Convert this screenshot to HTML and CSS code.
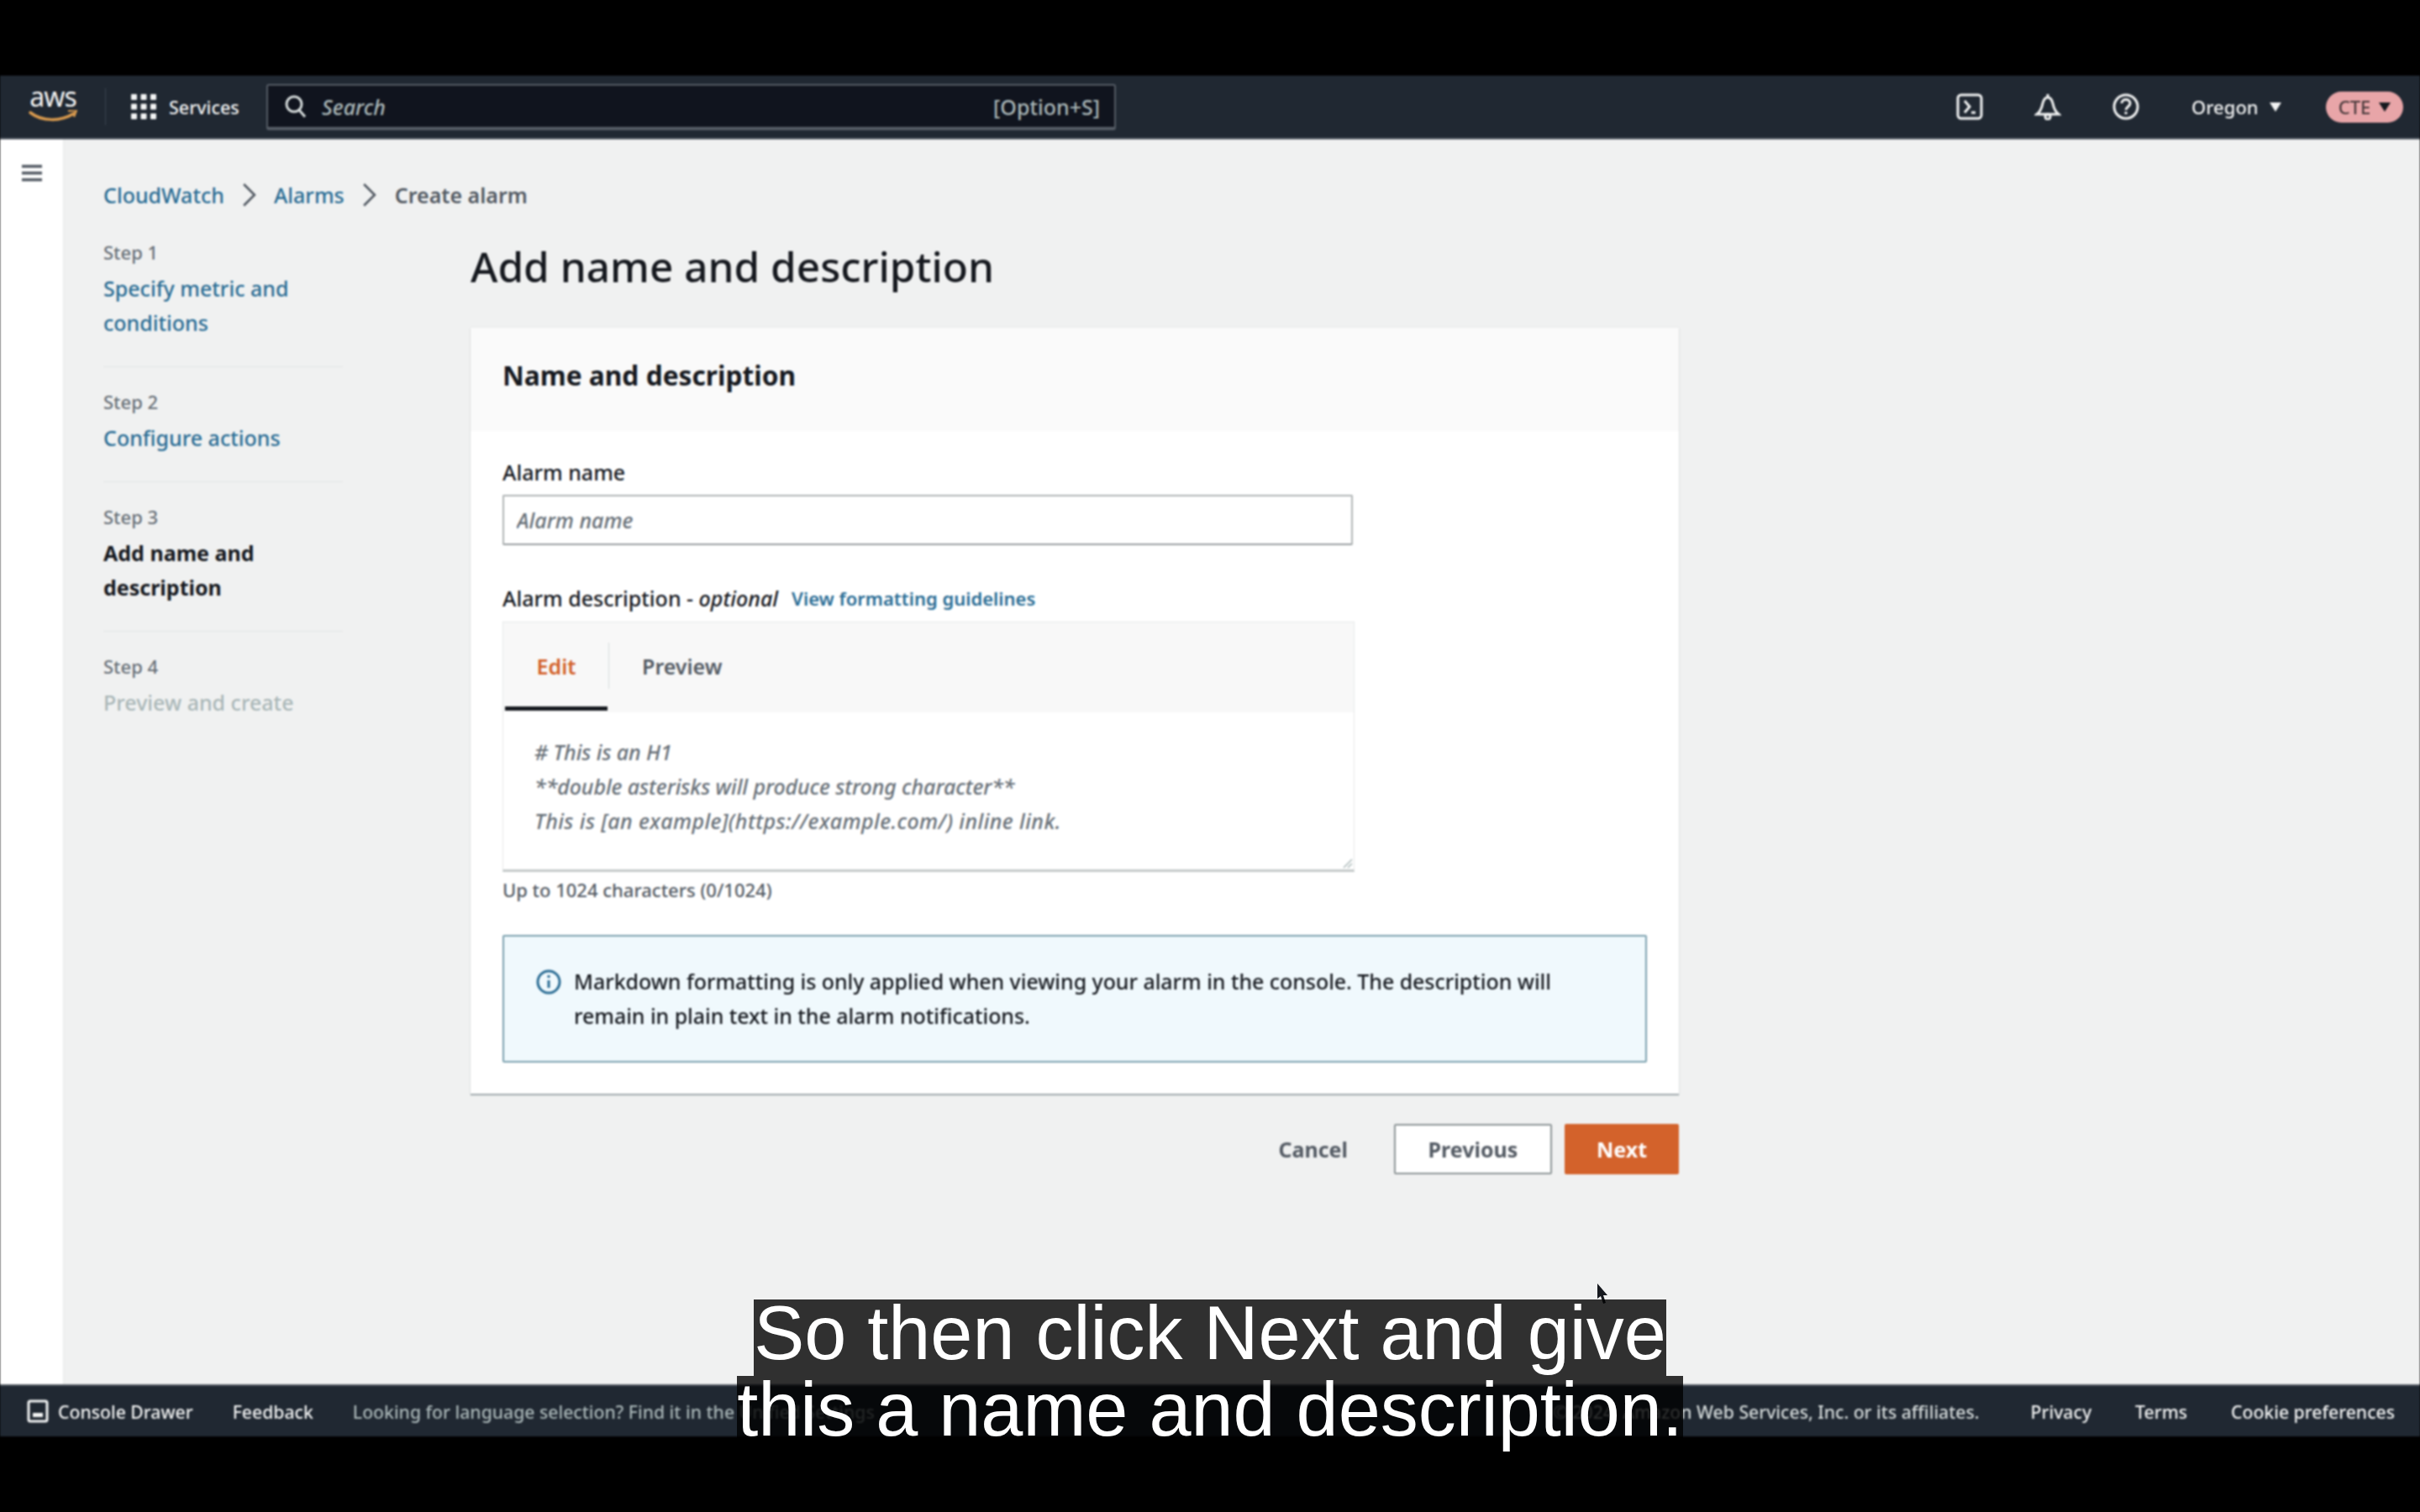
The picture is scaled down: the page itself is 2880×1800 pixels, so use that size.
FILE: index.html
```html
<!DOCTYPE html>
<html lang="en">
<head>
    <meta charset="UTF-8">
    <meta name="viewport" content="width=device-width, initial-scale=1.0">
    <title>Add name and description</title>
    <link rel="stylesheet" href="styles.css">
</head>
<body>
    <div class="letterbox"></div>
    <div class="app">
        <header class="topnav">
            <div class="logo">
                <span class="logo-text">aws</span>
                <svg class="logo-smile" viewBox="0 0 60 16"><path d="M3 3c14 11 36 11 52 1" fill="none" stroke="#d99a4e" stroke-width="3.5" stroke-linecap="round"/><path d="M48 1l10-1-3 8" fill="none" stroke="#d99a4e" stroke-width="2.5"/></svg>
            </div>
            <div class="nav-sep"></div>
            <svg class="grid-icon" viewBox="0 0 32 32" fill="#f2f3f3"><rect x="1" y="1" width="7" height="7" rx="1"/><rect x="12.5" y="1" width="7" height="7" rx="1"/><rect x="24" y="1" width="7" height="7" rx="1"/><rect x="1" y="12.5" width="7" height="7" rx="1"/><rect x="12.5" y="12.5" width="7" height="7" rx="1"/><rect x="24" y="12.5" width="7" height="7" rx="1"/><rect x="1" y="24" width="7" height="7" rx="1"/><rect x="12.5" y="24" width="7" height="7" rx="1"/><rect x="24" y="24" width="7" height="7" rx="1"/></svg>
            <span class="services">Services</span>
            <div class="search">
                <svg class="search-icon" viewBox="0 0 26 28" fill="none" stroke="#d5dbdb" stroke-width="3"><circle cx="11" cy="11" r="9"/><path d="M17 18l7 8"/></svg>
                <span class="search-text">Search</span>
                <span class="search-key">[Option+S]</span>
            </div>
            <div class="nav-right">
                <svg class="nav-icon" viewBox="0 0 32 32" fill="none" stroke="#f2f3f3" stroke-width="3"><rect x="2" y="2" width="28" height="28" rx="4"/><path d="M10 9l6 7-6 7M18 23h5"/></svg>
                <svg class="nav-icon" viewBox="0 0 32 32" fill="none" stroke="#f2f3f3" stroke-width="3"><path d="M3 25c4-3 6-8 7-13 1-4 3-7 6-7s5 3 6 7c1 5 3 10 7 13z"/><circle cx="16" cy="28" r="3"/><path d="M16 1v4"/></svg>
                <svg class="nav-icon nav-icon-last" viewBox="0 0 32 32" fill="none" stroke="#f2f3f3" stroke-width="3"><circle cx="16" cy="16" r="14"/><path d="M11 12c0-6 10-6 10 0 0 4-5 4-5 8M16 22v3"/></svg>
                <span class="region">Oregon <i class="caret"></i></span>
                <span class="account">CTE <i class="caret caret-dark"></i></span>
            </div>
        </header>

        <div class="shell">
            <aside class="rail">
                <svg class="menu-icon" viewBox="0 0 24 22" fill="none" stroke="#545b64" stroke-width="3.5"><path d="M0 3h24M0 11h24M0 19h24"/></svg>
            </aside>
            <main class="content">
                <nav class="breadcrumb">
                    <a href="#">CloudWatch</a>
                    <svg class="crumb-sep" viewBox="0 0 16 26" fill="none" stroke="#545b64" stroke-width="2.5"><path d="M2 1l12 12L2 25"/></svg>
                    <a href="#">Alarms</a>
                    <svg class="crumb-sep" viewBox="0 0 16 26" fill="none" stroke="#545b64" stroke-width="2.5"><path d="M2 1l12 12L2 25"/></svg>
                    <span class="crumb-current">Create alarm</span>
                </nav>
                <div class="wizard">
                    <ol class="steps">
                        <li class="step">
                            <small>Step 1</small>
                            <a href="#">Specify metric and conditions</a>
                        </li>
                        <li class="step">
                            <small>Step 2</small>
                            <a href="#">Configure actions</a>
                        </li>
                        <li class="step">
                            <small>Step 3</small>
                            <strong>Add name and description</strong>
                        </li>
                        <li class="step">
                            <small>Step 4</small>
                            <span class="step-off">Preview and create</span>
                        </li>
                    </ol>
                    <div class="form">
                        <h1>Add name and description</h1>
                        <section class="card">
                            <h2>Name and description</h2>
                            <div class="card-body">
                                <label for="alarmName">Alarm name</label>
                                <input type="text" id="alarmName" placeholder="Alarm name">

                                <div class="desc-label">
                                    <label>Alarm description - <em>optional</em></label>
                                    <a href="#">View formatting guidelines</a>
                                </div>
                                <div class="editor">
                                    <div class="tabs">
                                        <span class="tab tab-on">Edit</span>
                                        <span class="tab-sep"></span>
                                        <span class="tab">Preview</span>
                                    </div>
                                    <div class="sample">
                                        <div># This is an H1</div>
                                        <div>**double asterisks will produce strong character**</div>
                                        <div class="sample-wide">This is [an example](https://example.com/) inline link.</div>
                                        <svg class="grip" viewBox="0 0 12 12" fill="none" stroke="#aab7b8" stroke-width="1.5"><path d="M11 1L1 11M11 6l-5 5"/></svg>
                                    </div>
                                </div>
                                <p class="hint">Up to 1024 characters (0/1024)</p>

                                <div class="alert">
                                    <svg class="alert-icon" viewBox="0 0 30 30" fill="none" stroke="#2a6c94" stroke-width="3"><circle cx="15" cy="15" r="13"/><path d="M15 13v9M15 7v3"/></svg>
                                    <p>Markdown formatting is only applied when viewing your alarm in the console. The description will remain in plain text in the alarm notifications.</p>
                                </div>
                            </div>
                        </section>
                        <div class="actions">
                            <button type="button" class="btn-link">Cancel</button>
                            <button type="button" class="btn">Previous</button>
                            <button type="button" class="btn btn-primary">Next</button>
                        </div>
                    </div>
                </div>
            </main>
        </div>

        <footer class="bottombar">
            <svg class="drawer-icon" viewBox="0 0 26 28" fill="none" stroke="#f2f3f3" stroke-width="3"><rect x="2" y="2" width="22" height="24" rx="2"/><rect x="7" y="16" width="12" height="5" fill="#f2f3f3" stroke="none"/></svg>
            <span class="foot-link">Console Drawer</span>
            <span class="foot-link">Feedback</span>
            <span class="foot-note">Looking for language selection? Find it in the Unified Settings</span>
            <div class="foot-right">
                <span class="foot-copy">&copy; 2024, Amazon Web Services, Inc. or its affiliates.</span>
                <span class="foot-link">Privacy</span>
                <span class="foot-link">Terms</span>
                <span class="foot-link">Cookie preferences</span>
            </div>
        </footer>
    </div>
    <div class="letterbox"></div>

    <svg class="cursor" viewBox="0 0 14 24" fill="#16191f"><path d="M1 0l12 14-5 0 3 9-3 1-3-9-4 3z"/></svg>

    <div class="subtitle">
        <span>So then click Next and give</span>
        <span>this a name and description.</span>
    </div>
</body>
</html>
```

FILE: styles.css
```css
* {
    box-sizing: border-box;
}
body {
    margin: 0;
    width: 2880px;
    height: 1800px;
    overflow: hidden;
    background-color: #000;
    font-family: "Noto Sans", Arial, sans-serif;
    font-size: 25px;
    font-weight: 500;
    color: #16191f;
    position: relative;
}
a {
    color: #2a6c94;
    text-decoration: none;
}
.letterbox {
    height: 90px;
    background-color: #000;
}
.app {
    height: 1620px;
    display: flex;
    flex-direction: column;
    filter: blur(0.9px);
}

/* top bar */
.topnav {
    height: 76px;
    flex-shrink: 0;
    background-color: #202832;
    color: #f2f3f3;
    display: flex;
    align-items: center;
    padding-left: 33px;
    border-bottom: 2px solid #545b64;
}
.logo {
    width: 60px;
    height: 50px;
    margin-top: -6px;
    display: flex;
    flex-direction: column;
    align-items: center;
}
.logo-text {
    font-size: 32px;
    font-weight: 400;
    line-height: 32px;
    letter-spacing: -1px;
    color: #f2f3f3;
}
.logo-smile {
    width: 60px;
    height: 16px;
}
.nav-sep {
    width: 1px;
    height: 44px;
    background-color: #3a4350;
    margin: 0 29px 0 32px;
}
.grid-icon {
    width: 32px;
    height: 32px;
}
.services {
    font-size: 21.5px;
    margin-left: 14px;
    width: 116px;
}
.search {
    width: 1011px;
    height: 55px;
    background-color: #10141e;
    border: 2px solid #545b64;
    border-bottom-width: 4px;
    border-radius: 3px;
    display: flex;
    align-items: center;
    padding: 2px 17px 0 20px;
    color: #aab7b8;
}
.search-icon {
    width: 26px;
    height: 28px;
}
.search-text {
    font-style: italic;
    margin-left: 18px;
}
.search-key {
    margin-left: auto;
}
.nav-right {
    margin-left: auto;
    display: flex;
    align-items: center;
    padding-right: 20px;
}
.nav-icon {
    width: 32px;
    height: 32px;
    margin-right: 61px;
}
.nav-icon-last {
    margin-right: 63px;
}
.region {
    font-size: 22px;
    width: 160px;
    margin-left: -1px;
    display: flex;
    align-items: center;
    gap: 13px;
}
.caret {
    display: inline-block;
    border-left: 7px solid transparent;
    border-right: 7px solid transparent;
    border-top: 11px solid #f2f3f3;
}
.caret-dark {
    border-top-color: #16191f;
}
.account {
    width: 92px;
    height: 37px;
    border-radius: 19px;
    background-color: #e8a5a8;
    color: #4a3a3c;
    font-size: 22px;
    display: flex;
    align-items: center;
    justify-content: center;
    gap: 10px;
}

/* page */
.shell {
    flex: 1;
    display: flex;
    min-height: 0;
}
.rail {
    width: 76px;
    background-color: #fff;
    border-right: 1px solid #e6e8e8;
    padding: 29px 0 0 26px;
}
.menu-icon {
    display: block;
    width: 24px;
    height: 22px;
}
.content {
    flex: 1;
    background-color: #f0f1f1;
    padding: 49px 0 0 47px;
}
.breadcrumb {
    height: 34px;
    display: flex;
    align-items: center;
    gap: 21px;
}
.crumb-sep {
    width: 17px;
    height: 28px;
}
.crumb-current {
    color: #545b64;
    font-weight: 600;
    margin-left: 1px;
}

.wizard {
    display: flex;
    margin-top: 36px;
}
.steps {
    list-style: none;
    margin: 0;
    padding: 0;
    width: 285px;
    margin-right: 152px;
}
.step {
    padding-bottom: 31px;
    margin-bottom: 26px;
    border-bottom: 1px solid #e2e4e4;
    line-height: 41px;
}
.step:last-child {
    border-bottom: none;
}
.step small {
    display: block;
    font-size: 22px;
    line-height: 30px;
    margin-bottom: 8px;
    color: #687078;
}
.step a,
.step strong,
.step-off {
    display: block;
}
.step-off {
    color: #aab7b8;
}

.form {
    width: 1438px;
}
h1 {
    margin: 0 0 41px;
    font-size: 49.5px;
    line-height: 64px;
    font-weight: 500;
}
.card {
    background-color: #fff;
    box-shadow: 0 2px 1px rgba(0, 28, 36, 0.3), 0 0 1px rgba(0, 28, 36, 0.2);
}
h2 {
    margin: 0;
    height: 123px;
    padding: 0 38px 10px;
    display: flex;
    align-items: center;
    font-size: 31.7px;
    font-weight: 700;
    background-color: #fafafa;
}
.card-body {
    padding: 32px 38px 37px;
}
label {
    display: block;
    line-height: 34px;
    font-size: 25px;
}
input {
    display: block;
    width: 1012px;
    height: 60px;
    margin-top: 10px;
    padding: 0 15px;
    border: 2px solid #b0b5b6;
    border-bottom-color: #989ea0;
    border-radius: 2px;
    font-family: inherit;
    font-size: 25px;
    font-weight: 500;
}
input::placeholder {
    font-style: italic;
    color: #687078;
    opacity: 1;
}
.desc-label {
    display: flex;
    align-items: center;
    gap: 16px;
    margin-top: 46px;
}
.desc-label a {
    font-size: 22px;
    font-weight: 600;
}
.editor {
    width: 1014px;
    height: 298px;
    margin-top: 11px;
    border: 1px solid #e6e8e8;
    border-bottom: 3px solid #c4c9c9;
    display: flex;
    flex-direction: column;
}
.tabs {
    height: 107px;
    padding-bottom: 4px;
    background-color: #f8f8f8;
    display: flex;
    align-items: center;
    flex-shrink: 0;
}
.tab {
    font-weight: 600;
    color: #545b64;
    margin-left: 39px;
}
.tab-on {
    align-self: flex-start;
    margin: 0 0 0 2px;
    width: 122px;
    height: 105px;
    padding-top: 4px;
    border-bottom: 5px solid #16191f;
    color: #d3622b;
    display: flex;
    align-items: center;
    justify-content: center;
}
.tab-sep {
    width: 1px;
    height: 55px;
    margin-left: 1px;
    background-color: #d5dbdb;
}
.sample {
    flex: 1;
    position: relative;
    padding: 27px 37px 0;
    line-height: 41px;
    font-style: italic;
    letter-spacing: -0.1px;
    color: #687078;
    background-color: #fff;
}
.sample-wide {
    letter-spacing: 0.4px;
}
.grip {
    position: absolute;
    right: 1px;
    bottom: 1px;
    width: 12px;
    height: 12px;
}
.hint {
    margin: 6px 0 39px;
    font-size: 22px;
    line-height: 30px;
    color: #545b64;
}
.alert {
    height: 152px;
    background-color: #f0f9fd;
    border: 2px solid #7ba0ae;
    border-radius: 2px;
    display: flex;
    align-items: flex-start;
    padding: 33px 90px 0 38px;
}
.alert-icon {
    width: 30px;
    height: 30px;
    flex-shrink: 0;
    margin: 6px 15px 0 0;
}
.alert p {
    margin: 0;
    line-height: 41px;
    letter-spacing: -0.06px;
}
.actions {
    display: flex;
    justify-content: flex-end;
    align-items: center;
    margin-top: 36px;
    gap: 15px;
}
.btn,
.btn-link {
    height: 60px;
    font-family: inherit;
    font-size: 25px;
    font-weight: 700;
    color: #545b64;
    background: none;
    border: none;
    padding: 0;
}
.btn {
    background-color: #fff;
    border: 2px solid #8d9596;
    border-radius: 2px;
    width: 188px;
}
.btn-link {
    margin-right: 40px;
}
.btn-primary {
    width: 136px;
    background-color: #d3622b;
    border: none;
    color: #fff;
}

/* footer */
.bottombar {
    height: 62px;
    flex-shrink: 0;
    background-color: #202832;
    border-top: 2px solid #545b64;
    color: #f2f3f3;
    font-size: 21.2px;
    display: flex;
    align-items: center;
    padding: 0 30px 0 32px;
}
.drawer-icon {
    width: 26px;
    height: 28px;
    margin-right: 11px;
}
.foot-link {
    white-space: nowrap;
    margin-right: 47px;
}
.foot-note {
    color: #aab7b8;
    white-space: nowrap;
}
.foot-right {
    margin-left: auto;
    display: flex;
    align-items: center;
}
.foot-right .foot-link {
    margin: 0 0 0 52px;
}
.foot-copy {
    white-space: nowrap;
    margin-right: 9px;
    color: #d5dbdb;
}

/* overlays */
.cursor {
    position: absolute;
    left: 1900px;
    top: 1528px;
    width: 14px;
    height: 24px;
}
.subtitle {
    position: absolute;
    left: 0;
    right: 0;
    top: 1547px;
    display: flex;
    flex-direction: column;
    align-items: center;
    font-family: "Liberation Sans", Arial, sans-serif;
    font-size: 90px;
    line-height: 81px;
    color: #fff;
}
.subtitle span {
    background-color: rgba(0, 0, 0, 0.8);
    padding-bottom: 10px;
    white-space: nowrap;
}
```
